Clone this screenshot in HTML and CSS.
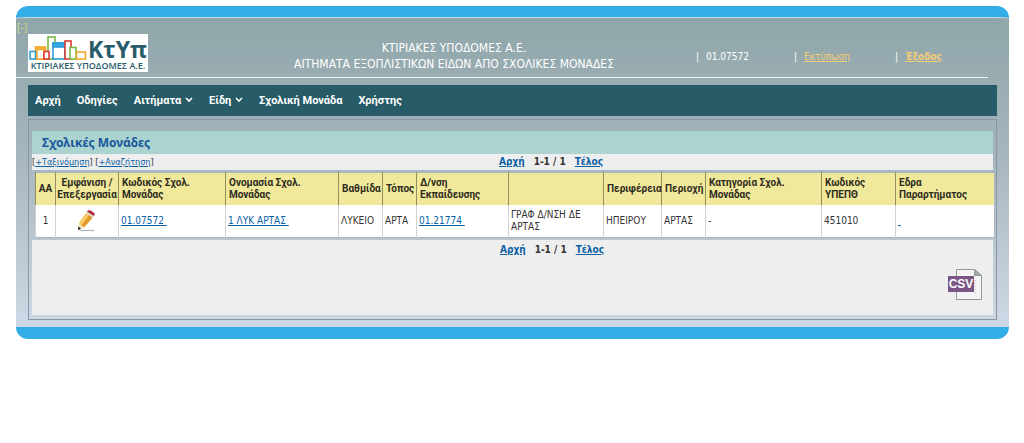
FILE: index.html
```html
<!DOCTYPE html>
<html lang="el">
<head>
<meta charset="utf-8">
<title>Σχολικές Μονάδες</title>
<link rel="stylesheet" href="styles.css">
</head>
<body>
<div class="shell">
  <header class="header">
    <a class="collapse" href="#">[-]</a>
    <svg class="logo" width="120" height="38" viewBox="0 0 120 38" role="img" aria-label="ΚΤΥΠ">
      <rect width="120" height="38" fill="#fff"/>
      <g fill="#fff" stroke-width="1.6">
        <rect x="7.500" y="13" width="10" height="12" stroke="#f2a92c" fill="#f7b545"/>
        <rect x="20" y="3" width="7" height="22" stroke="#79b843"/>
        <rect x="2" y="17.500" width="5.500" height="7.500" stroke="#2f9fd8"/>
        <rect x="9" y="15.500" width="7" height="9.500" stroke="#f2a92c"/>
        <rect x="16" y="17.500" width="5" height="7.500" stroke="#d93a34"/>
        <rect x="25" y="9" width="12" height="16" stroke="#2f9fd8"/>
        <rect x="25" y="9" width="12" height="4" fill="#35a5df" stroke="#2f9fd8"/>
        <rect x="37" y="7" width="6" height="18" stroke="#d93a34"/>
        <rect x="42" y="13.500" width="6" height="11.500" stroke="#79b843"/>
        <rect x="48.500" y="18" width="9" height="7" stroke="#f2a92c"/>
      </g>
      <text class="logo-name" x="60" y="24">ΚτΥπ</text>
      <text class="logo-sub" x="60" y="35" text-anchor="middle">ΚΤΙΡΙΑΚΕΣ ΥΠΟΔΟΜΕΣ Α.Ε.</text>
    </svg>
    <div class="titles">
      <div>ΚΤΙΡΙΑΚΕΣ ΥΠΟΔΟΜΕΣ Α.Ε.</div>
      <div>ΑΙΤΗΜΑΤΑ ΕΞΟΠΛΙΣΤΙΚΩΝ ΕΙΔΩΝ ΑΠΟ ΣΧΟΛΙΚΕΣ ΜΟΝΑΔΕΣ</div>
    </div>
    <div class="session">
      <span class="item"><span>|</span><span>01.07572</span></span>
      <span class="item"><span>|</span><a href="#">Εκτύπωση</a></span>
      <span class="item"><span>|</span><a class="exit" href="#">Έξοδος</a></span>
    </div>
  </header>
  <main class="main">
    <nav class="nav">
      <a href="#">Αρχή</a>
      <a href="#">Οδηγίες</a>
      <a href="#">Αιτήματα <svg width="8" height="6" viewBox="0 0 8 6"><path d="M1 1l3 3 3-3" fill="none" stroke="#fff" stroke-width="1.600"/></svg></a>
      <a href="#">Είδη <svg width="8" height="6" viewBox="0 0 8 6"><path d="M1 1l3 3 3-3" fill="none" stroke="#fff" stroke-width="1.600"/></svg></a>
      <a href="#">Σχολική Μονάδα</a>
      <a href="#">Χρήστης</a>
    </nav>
    <section class="panel">
      <h1 class="heading">Σχολικές Μονάδες</h1>
      <div class="tools">
        <div class="filters">[<a href="#">+Ταξινόμηση</a>] [<a href="#">+Αναζήτηση</a>]</div>
        <div class="pager"><a href="#">Αρχή</a><span>1-1 / 1</span><a href="#">Τέλος</a></div>
      </div>
      <table class="grid">
        <colgroup>
          <col class="w-num"><col class="w-edit"><col class="w-code"><col class="w-name"><col class="w-level"><col class="w-place"><col class="w-dir"><col class="w-dirname"><col class="w-region"><col class="w-area"><col class="w-cat"><col class="w-min"><col>
        </colgroup>
        <thead>
          <tr>
            <th class="center">ΑΑ</th><th class="center">Εμφάνιση / Επεξεργασία</th><th>Κωδικός Σχολ.<br>Μονάδας</th><th>Ονομασία Σχολ.<br>Μονάδας</th><th>Βαθμίδα</th><th>Τόπος</th><th>Δ/νση<br>Εκπαίδευσης</th><th></th><th>Περιφέρεια</th><th>Περιοχή</th><th>Κατηγορία Σχολ.<br>Μονάδας</th><th>Κωδικός<br>ΥΠΕΠΘ</th><th>Εδρα<br>Παραρτήματος</th>
          </tr>
        </thead>
        <tbody>
          <tr>
            <td class="center">1</td>
            <td class="center"><a href="#" aria-label="Επεξεργασία"><svg class="pencil" width="22" height="24" viewBox="0 0 22 24">
              <path d="M4 21.500h14" stroke="#a9b4bb" stroke-width="1.200"/>
              <path d="M2 21l1-7 5 4z" fill="#f6dfb8"/>
              <path d="M3 14L10 4l6.500 4.500L8 18.500z" fill="#f3b63f"/>
              <path d="M5.500 16L13 6l3.500 2.500L8 18.500z" fill="#e39a2c"/>
              <path d="M4 14L11 4l2 1.500L6 15.500z" fill="#f9cf72"/>
              <path d="M10 4l1-1.500 7 4.500-1.500 1.500z" fill="#d9d4d0"/>
              <path d="M11 2.500q1.500-2 3.500-1l3 2q2 1.500.5 3.500z" fill="#ac2730"/>
              <path d="M2 21.500l.5-4 2.500 2z" fill="#252525"/>
            </svg></a></td>
            <td><a href="#">01.07572&nbsp;</a></td>
            <td><a href="#">1 ΛΥΚ ΑΡΤΑΣ&nbsp;</a></td>
            <td>ΛΥΚΕΙΟ</td><td>ΑΡΤΑ</td>
            <td><a href="#">01.21774&nbsp;</a></td>
            <td>ΓΡΑΦ Δ/ΝΣΗ ΔΕ<br>ΑΡΤΑΣ</td><td>ΗΠΕΙΡΟΥ</td><td>ΑΡΤΑΣ</td><td>-</td><td>451010</td>
            <td><a href="#">&nbsp;</a></td>
          </tr>
        </tbody>
      </table>
      <footer class="foot">
        <div class="pager"><a href="#">Αρχή</a><span>1-1 / 1</span><a href="#">Τέλος</a></div>
        <a class="csv" href="#"><svg width="36" height="34" viewBox="0 0 36 34" role="img" aria-label="CSV">
          <path d="M9.500 1.500h18l7 6v24h-25z" fill="#f4f4f4" stroke="#929c96"/>
          <path d="M27.500 1.500v6h7z" fill="#a3a9a5" stroke="#929c96"/>
          <path d="M28 12v13" stroke="#b8a3b8" stroke-dasharray="1 2"/>
          <rect x="1" y="8" width="26" height="16" fill="#7b5685"/>
          <text class="csv-text" x="14" y="20" text-anchor="middle">CSV</text>
        </svg></a>
      </footer>
    </section>
  </main>
</div>
</body>
</html>
```
FILE: styles.css
```css
* { box-sizing: border-box; }
body {
  margin: 6px 15px 6px 16px;
  background: #fff;
  color: #333;
  font: 10px/12px "DejaVu Sans Condensed", "DejaVu Sans", sans-serif;
}
a { color: #0b61a4; }
.shell {
  position: relative;
  border-top: 11px solid #33ade5;
  border-bottom: 12px solid #33ade5;
  border-radius: 12px;
  background: linear-gradient(#8fa6a9, #a3b3ba 40%, #cfd8e6);
  box-shadow: inset 0 1px #c8dce2;
}
.header {
  display: grid;
  grid-template-columns: 120px 1fr 300px;
  align-items: center;
  height: 61px;
  margin-right: 21px;
  padding: 11px 0 0 12px;
  border-bottom: 1px solid #eef4f5;
  color: #fff;
}
.collapse {
  position: absolute;
  top: 5px;
  left: 1px;
  color: #d5d67c;
  text-decoration: none;
}
.logo { display: block; }
.logo-name { font: bold 23px "Open Sans", sans-serif; fill: #285c69; }
.logo-sub { font: 600 9px "Open Sans", sans-serif; fill: #285c69; }
.titles {
  padding: 6px 0 0 72px;
  font-size: 12px;
  line-height: 16px;
  text-align: center;
}
.session {
  display: grid;
  grid-template-columns: 98px 101px 1fr;
  padding: 8px 0 0 8px;
}
.item { display: flex; gap: 7px; }
.item a { color: #f4cb76; }
.item .exit { font-weight: bold; }
.main { padding: 7px 12px; }
.nav {
  display: flex;
  gap: 16px;
  align-items: center;
  height: 31px;
  padding: 0 7px;
  background: #265b67;
}
.nav a {
  color: #fff;
  font: bold 11px/16px Roboto, sans-serif;
  text-decoration: none;
}
.nav svg { margin-left: 1px; vertical-align: 1px; }
.panel {
  margin-top: 3px;
  padding: 11px 3px 4px;
  border: 1px solid #8b96a5;
}
.heading {
  margin: 0;
  padding: 2px 10px;
  background: #abd4d1;
  color: #1a579a;
  font: bold 12px/19px "Noto Sans", sans-serif;
}
.tools {
  display: grid;
  grid-template-columns: 467px 1fr;
  height: 16px;
  align-items: center;
  background: #eee;
}
.filters { font-size: 9px; }
.pager {
  display: flex;
  gap: 9px;
  font-weight: bold;
}
.grid {
  width: calc(100% - 1px);
  margin: 2px 0 2px 3px;
  border: 1px solid #a8b6c0;
  border-collapse: collapse;
  table-layout: fixed;
  background: #fff;
}
.grid th {
  height: 32px;
  padding: 0 0 0 3px;
  border-left: 1px solid #958e58;
  background: #f0e89b;
  color: #2d2b20;
  font-family: Roboto, sans-serif;
  text-align: left;
}
.grid td {
  height: 33px;
  padding: 0 0 0 2px;
  border-left: 1px solid #d2d2d2;
}
.grid .center { padding: 0; text-align: center; }
.w-num { width: 20px; }
.w-edit { width: 63px; }
.w-code { width: 107px; }
.w-name { width: 113px; }
.w-level { width: 44px; }
.w-place { width: 34px; }
.w-dir { width: 92px; }
.w-dirname { width: 95px; }
.w-region { width: 58px; }
.w-area { width: 44px; }
.w-cat { width: 116px; }
.w-min { width: 74px; }
.pencil { display: block; margin: 0 auto; }
.foot {
  padding: 4px 10px 13px 468px;
  background: #eee;
}
.csv {
  display: block;
  width: 36px;
  margin: 12px 0 0 auto;
}
.csv svg { display: block; }
.csv-text { font: bold 12px "Liberation Sans", sans-serif; fill: #fff; }
```
